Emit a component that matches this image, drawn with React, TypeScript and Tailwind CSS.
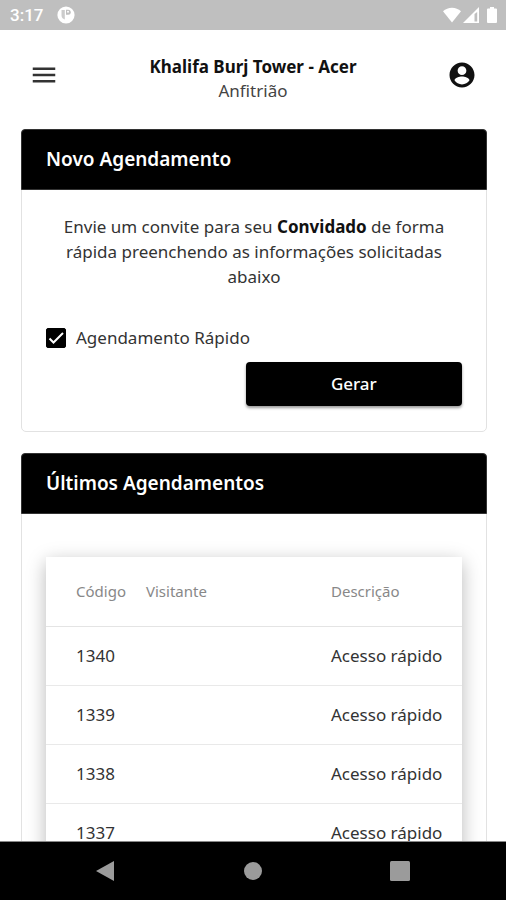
import type { ReactNode } from "react";

const appointments = [
  { code: "1340", description: "Acesso rápido" },
  { code: "1339", description: "Acesso rápido" },
  { code: "1338", description: "Acesso rápido" },
  { code: "1337", description: "Acesso rápido" },
];

function StatusBar() {
  return (
    <div className="flex h-[30px] shrink-0 items-center justify-between bg-[#bfbfbf] pr-[9px] pl-2.5 text-white">
      <div className="flex items-center gap-3.5">
        <span className="font-[Roboto,sans-serif] text-[17px] leading-6 font-medium">3:17</span>
        <svg className="size-[18px]" viewBox="0 0 18 18" aria-hidden="true">
          <circle cx="9" cy="9" r="8.6" fill="currentColor" />
          <path d="M4.500 4h3.300v9.500C5.500 12.800 4.500 11.500 4.500 9z" fill="#bfbfbf" opacity=".8" />
          <path d="M9 3.800h2.200a2.500 2.500 0 0 1 0 5H9z" fill="#bfbfbf" />
          <circle cx="11" cy="5.800" r="1" fill="currentColor" />
        </svg>
      </div>
      <div className="flex items-center">
        <svg className="h-4 w-[18px]" viewBox="0 0 18 16" fill="currentColor" aria-hidden="true">
          <path d="M9 15.500 0 4.200C2.500 1.900 5.600.7 9 .7s6.500 1.200 9 3.500z" />
        </svg>
        <svg className="mr-2 ml-0.5 h-4 w-4" viewBox="0 0 16 16" aria-hidden="true">
          <path d="M0 16 16 0v16z" fill="currentColor" />
          <path d="M11.500 7v7.500h2.700V5z" fill="#bfbfbf" />
        </svg>
        <svg className="h-4 w-2.5" viewBox="0 0 10 16" fill="currentColor" aria-hidden="true">
          <path d="M3 0h4v1.600h2a1 1 0 0 1 1 1V15a1 1 0 0 1-1 1H1a1 1 0 0 1-1-1V2.600a1 1 0 0 1 1-1h2z" />
        </svg>
      </div>
    </div>
  );
}

function Header() {
  return (
    <header className="flex items-start justify-between px-[29px] pt-[25px] pb-[26px]">
      <button type="button" aria-label="Menu" className="flex h-10 items-center">
        <svg className="size-[30px]" viewBox="0 0 24 24" fill="#333" aria-hidden="true">
          <path d="M3 18h18v-2H3v2zm0-5h18v-2H3v2zm0-7v2h18V6H3z" />
        </svg>
      </button>
      <div className="text-center text-[17px] leading-6">
        <h1 className="font-bold text-[#111]">Khalifa Burj Tower - Acer</h1>
        <p className="text-[#444]">Anfitrião</p>
      </div>
      <button type="button" aria-label="Perfil" className="flex h-10 items-center">
        <svg className="size-[30px]" viewBox="0 0 24 24" fill="#111" aria-hidden="true">
          <path d="M12 2C6.480 2 2 6.480 2 12s4.480 10 10 10 10-4.480 10-10S17.520 2 12 2zm0 3c1.930 0 3.500 1.570 3.500 3.500S13.930 12 12 12s-3.500-1.570-3.500-3.500S10.070 5 12 5zm0 14.500c-2.500 0-4.710-1.280-6-3.220.03-1.990 4-3.080 6-3.080 1.990 0 5.970 1.090 6 3.080-1.290 1.940-3.500 3.220-6 3.220z" />
        </svg>
      </button>
    </header>
  );
}

function Card({ title, children }: { title: string; children: ReactNode }) {
  return (
    <section className="rounded-[5px] border border-[#e2e2e2]">
      <h2 className="-mx-px -mt-px rounded-t-[4px] border border-[#333] bg-black px-6 py-[17px] text-[19px] leading-[25px] font-semibold text-white">
        {title}
      </h2>
      {children}
    </section>
  );
}

export default function App() {
  return (
    <div className="flex h-screen flex-col bg-white font-['Noto_Sans',sans-serif] text-[#333]">
      <StatusBar />
      <main className="min-h-0 flex-1 overflow-x-hidden overflow-y-auto [scrollbar-width:none]">
        <Header />
        <div className="flex flex-col gap-[21px] pr-[19px] pb-5 pl-[21px]">
          <Card title="Novo Agendamento">
            <div className="px-6 pt-6 pb-[25px]">
              <p className="text-center text-[17px] leading-[25px]">
                Envie um convite para seu <strong className="font-bold text-[#111]">Convidado</strong> de forma
                rápida preenchendo as informações solicitadas abaixo
              </p>
              <label className="mt-9 flex items-center gap-2.5 text-[17px] leading-[25px]">
                <span className="grid size-5">
                  <input
                    type="checkbox"
                    defaultChecked
                    className="peer col-start-1 row-start-1 size-5 appearance-none rounded-[2px] border border-black checked:bg-black"
                  />
                  <svg
                    className="pointer-events-none invisible col-start-1 row-start-1 size-5 peer-checked:visible"
                    viewBox="0 0 20 20"
                    fill="none"
                    stroke="white"
                    strokeWidth="2"
                    aria-hidden="true"
                  >
                    <path d="m3.500 10.500 4 4L17 5" />
                  </svg>
                </span>
                Agendamento Rápido
              </label>
              <div className="mt-3 flex justify-end">
                <button
                  type="button"
                  className="h-11 w-[52%] rounded bg-black text-[17px] font-medium text-white shadow-[0_2px_3px_rgba(0,0,0,0.4)]"
                >
                  Gerar
                </button>
              </div>
            </div>
          </Card>

          <Card title="Últimos Agendamentos">
            <div className="px-6 pt-[43px] pb-6">
              <table className="w-full table-fixed border-collapse bg-white text-left shadow-[0_5px_18px_rgba(0,0,0,0.28)]">
                <thead>
                  <tr className="h-[69px] border-b border-[#e4e4e4] text-[15px] text-[#888]">
                    <th className="w-[100px] pl-[30px] font-normal">Código</th>
                    <th className="font-normal">Visitante</th>
                    <th className="w-[131px] font-normal">Descrição</th>
                  </tr>
                </thead>
                <tbody className="text-[17px]">
                  {appointments.map((item) => (
                    <tr key={item.code} className="h-[59px] border-b border-[#e9e9e9]">
                      <td className="pl-[30px]">{item.code}</td>
                      <td></td>
                      <td>{item.description}</td>
                    </tr>
                  ))}
                </tbody>
              </table>
            </div>
          </Card>
        </div>
      </main>
      <nav className="h-[59px] shrink-0 border-t border-[#888] bg-black text-[#9b9b9b]">
        <div className="mx-auto grid h-full w-[87%] grid-cols-3 place-items-center">
          <button type="button" aria-label="Voltar">
            <svg className="size-5" viewBox="0 0 20 20" fill="currentColor" aria-hidden="true">
              <path d="M0 10 18 0v20z" />
            </svg>
          </button>
          <button type="button" aria-label="Início">
            <svg className="size-5" viewBox="0 0 20 20" fill="currentColor" aria-hidden="true">
              <circle cx="10" cy="10" r="9" />
            </svg>
          </button>
          <button type="button" aria-label="Recentes">
            <svg className="size-5" viewBox="0 0 20 20" fill="currentColor" aria-hidden="true">
              <rect width="20" height="20" rx="1.500" />
            </svg>
          </button>
        </div>
      </nav>
    </div>
  );
}
